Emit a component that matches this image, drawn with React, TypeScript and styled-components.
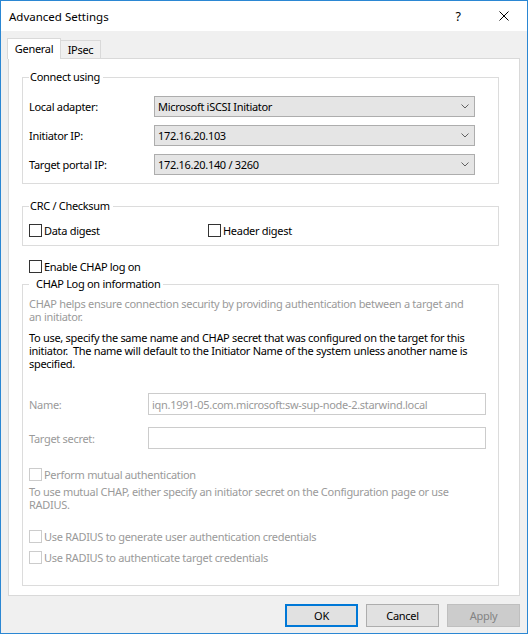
import React from 'react'
import styled, { createGlobalStyle, css } from 'styled-components'

const GlobalStyle = createGlobalStyle`
  html, body {
    margin: 0;
    padding: 0;
    background: #fff;
  }

  body {
    font-family: 'Noto Sans', 'Open Sans', sans-serif;
    font-size: 11px;
    letter-spacing: -0.3px;
    color: #000;
  }

  * {
    box-sizing: border-box;
  }
`

const Window = styled.div`
  width: 528px;
  height: 634px;
  border: 1px solid #2b87d3;
  background: #f0f0f0;
  display: flex;
  flex-direction: column;
`

const TitleBar = styled.div`
  height: 30px;
  flex: none;
  background: #fff;
  display: flex;
  align-items: center;
  padding-left: 8px;
`

const Title = styled.div`
  flex: 1;
  font-size: 11.5px;
  letter-spacing: 0;
  padding-top: 1px;
`

const CaptionButton = styled.div`
  width: 46px;
  height: 30px;
  display: flex;
  align-items: center;
  justify-content: center;
  font-size: 12.5px;
`

const Body = styled.div`
  flex: 1;
  display: flex;
  flex-direction: column;
  padding: 7px 7px 0 7px;
`

const TabStrip = styled.div`
  height: 20px;
  display: flex;
  align-items: flex-end;
  position: relative;
  z-index: 1;
`

const Tab = styled.div<{ $active?: boolean; $width: number }>`
  width: ${(p) => p.$width}px;
  height: 18px;
  border: 1px solid #d9d9d9;
  border-bottom: none;
  background: #f0f0f0;
  display: flex;
  align-items: center;
  justify-content: center;
  margin-left: -1px;

  ${(p) =>
    p.$active &&
    css`
      height: 21px;
      background: #fff;
      margin-bottom: -1px;
      padding-bottom: 2px;
    `}
`

const Panel = styled.div`
  height: 538px;
  flex: none;
  background: #fff;
  border: 1px solid #d9d9d9;
  padding: 0 0 0 13px;
`

const Group = styled.fieldset<{ $top: number; $bottom: number; $height?: number }>`
  width: 477px;
  margin: ${(p) => p.$top}px 0 0 0;
  padding: 0 6px ${(p) => p.$bottom}px 6px;
  border: 1px solid #dcdcdc;
  min-inline-size: 0;
  ${(p) => p.$height && `height: ${p.$height}px;`}
`

const Legend = styled.legend<{ $indent?: number }>`
  line-height: 16px;
  padding: 0 3px 0 ${(p) => p.$indent ?? 1}px;
  margin-left: 0;
`

const FieldGrid = styled.div<{ $label: number; $gap: number; $top: number }>`
  display: grid;
  grid-template-columns: ${(p) => p.$label}px 1fr;
  row-gap: ${(p) => p.$gap}px;
  align-items: center;
  margin-top: ${(p) => p.$top}px;
`

const FieldLabel = styled.div<{ $disabled?: boolean }>`
  color: ${(p) => (p.$disabled ? '#9a9a9a' : '#000')};
`

const Combo = styled.div`
  width: 321px;
  height: 21px;
  background: #e5e5e5;
  border: 1px solid #adadad;
  display: flex;
  align-items: center;
  padding: 0 5px 0 3px;
`

const ComboText = styled.span`
  flex: 1;
`

const TextInput = styled.div`
  width: 338px;
  height: 22px;
  border: 1px solid #cccccc;
  background: #fff;
  color: #9a9a9a;
  display: flex;
  align-items: center;
  padding: 0 3px;
`

const CheckGrid = styled.div`
  display: grid;
  grid-template-columns: 179px auto;
  margin-top: 8px;
`

const CheckRow = styled.label<{ $top?: number; $left?: number; $disabled?: boolean }>`
  display: flex;
  align-items: center;
  height: 16px;
  margin-top: ${(p) => p.$top ?? 0}px;
  margin-left: ${(p) => p.$left ?? 0}px;
  color: ${(p) => (p.$disabled ? '#9a9a9a' : '#000')};
`

const Box = styled.span<{ $disabled?: boolean }>`
  width: 13px;
  height: 13px;
  flex: none;
  background: #fff;
  border: 1px solid ${(p) => (p.$disabled ? '#cccccc' : '#333333')};
  margin-right: 2px;
`

const Note = styled.div<{ $top: number; $disabled?: boolean }>`
  line-height: 13px;
  margin-top: ${(p) => p.$top}px;
  white-space: nowrap;
  color: ${(p) => (p.$disabled ? '#9a9a9a' : '#000')};
`

const Footer = styled.div`
  display: flex;
  justify-content: flex-end;
  gap: 8px;
  margin-top: 8px;
`

const Button = styled.div<{ $variant?: 'default' | 'disabled' }>`
  width: 73px;
  height: 23px;
  background: #e1e1e1;
  border: 1px solid #adadad;
  display: flex;
  align-items: center;
  justify-content: center;

  ${(p) =>
    p.$variant === 'default' &&
    css`
      border: 2px solid #0078d7;
    `}

  ${(p) =>
    p.$variant === 'disabled' &&
    css`
      background: #cccccc;
      border-color: #bfbfbf;
      color: #838383;
    `}
`

const Chevron = () => (
  <svg width="8" height="5" viewBox="0 0 8 5">
    <polyline points="0.5,0.5 4,4 7.5,0.5" fill="none" stroke="#606060" strokeWidth="1" />
  </svg>
)

const CloseIcon = () => (
  <svg width="10" height="10" viewBox="0 0 10 10">
    <path d="M0.5 0.5 L9.5 9.5 M9.5 0.5 L0.5 9.5" stroke="#000" strokeWidth="1" />
  </svg>
)

const App = () => {
  return (
    <>
      <GlobalStyle />
      <Window>
        <TitleBar>
          <Title>Advanced Settings</Title>
          <CaptionButton>?</CaptionButton>
          <CaptionButton>
            <CloseIcon />
          </CaptionButton>
        </TitleBar>

        <Body>
          <TabStrip>
            <Tab $active $width={54}>
              General
            </Tab>
            <Tab $width={41}>IPsec</Tab>
          </TabStrip>

          <Panel>
            <Group $top={10} $bottom={8}>
              <Legend>Connect using</Legend>
              <FieldGrid $label={125} $gap={8} $top={11}>
                <FieldLabel>Local adapter:</FieldLabel>
                <Combo>
                  <ComboText>Microsoft iSCSI Initiator</ComboText>
                  <Chevron />
                </Combo>
                <FieldLabel>Initiator IP:</FieldLabel>
                <Combo>
                  <ComboText>172.16.20.103</ComboText>
                  <Chevron />
                </Combo>
                <FieldLabel>Target portal IP:</FieldLabel>
                <Combo>
                  <ComboText>172.16.20.140 / 3260</ComboText>
                  <Chevron />
                </Combo>
              </FieldGrid>
            </Group>

            <Group $top={14} $bottom={7}>
              <Legend>CRC / Checksum</Legend>
              <CheckGrid>
                <CheckRow>
                  <Box />
                  Data digest
                </CheckRow>
                <CheckRow>
                  <Box />
                  Header digest
                </CheckRow>
              </CheckGrid>
            </Group>

            <CheckRow $top={12} $left={7}>
              <Box />
              Enable CHAP log on
            </CheckRow>

            <Group $top={2} $bottom={0} $height={310}>
              <Legend $indent={7}>CHAP Log on information</Legend>
              <Note $top={5} $disabled>
                CHAP helps ensure connection security by providing authentication between a target and
                <br />
                an initiator.
              </Note>
              <Note $top={8}>
                To use, specify the same name and CHAP secret that was configured on the target for this
                <br />
                initiator.&nbsp; The name will default to the Initiator Name of the system unless another name is
                <br />
                specified.
              </Note>

              <FieldGrid $label={119} $gap={12} $top={23}>
                <FieldLabel $disabled>Name:</FieldLabel>
                <TextInput>iqn.1991-05.com.microsoft:sw-sup-node-2.starwind.local</TextInput>
                <FieldLabel $disabled>Target secret:</FieldLabel>
                <TextInput />
              </FieldGrid>

              <CheckRow $top={17} $disabled>
                <Box $disabled />
                Perform mutual authentication
              </CheckRow>
              <Note $top={3} $disabled>
                To use mutual CHAP, either specify an initiator secret on the Configuration page or use
                <br />
                RADIUS.
              </Note>

              <CheckRow $top={17} $disabled>
                <Box $disabled />
                Use RADIUS to generate user authentication credentials
              </CheckRow>
              <CheckRow $top={5} $disabled>
                <Box $disabled />
                Use RADIUS to authenticate target credentials
              </CheckRow>
            </Group>
          </Panel>

          <Footer>
            <Button $variant="default">OK</Button>
            <Button>Cancel</Button>
            <Button $variant="disabled">Apply</Button>
          </Footer>
        </Body>
      </Window>
    </>
  )
}

export default App
